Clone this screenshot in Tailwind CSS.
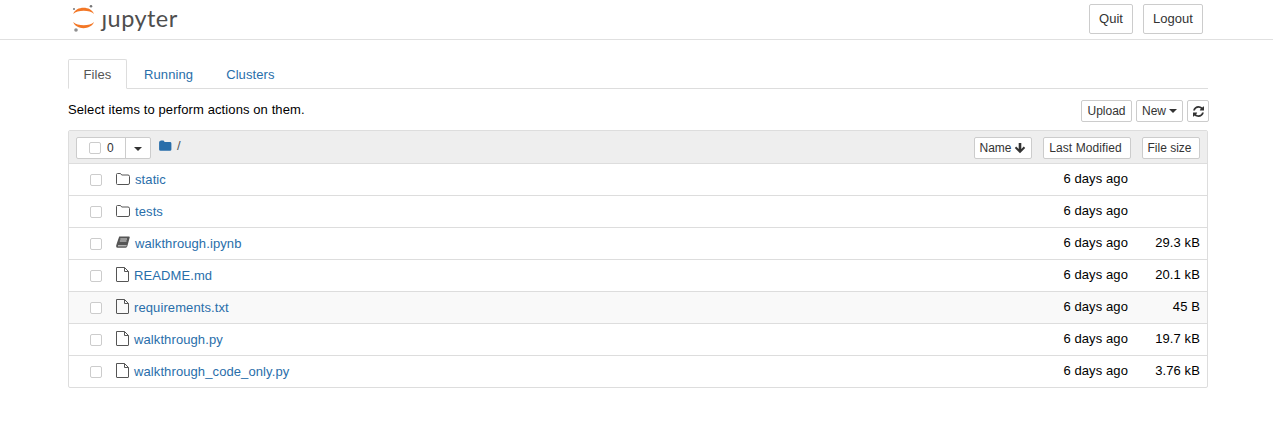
<!DOCTYPE html>
<html lang="en">
<head>
<meta charset="utf-8">
<title>Home</title>
<script src="https://cdn.jsdelivr.net/npm/@tailwindcss/browser@4"></script>
</head>
<body class="bg-white font-['Liberation_Sans',Arial,sans-serif] text-[13px] text-black leading-[18px] tracking-[0.1px] h-[448px] overflow-hidden">
<header class="h-10 border-b border-[#e0e0e0] flex items-start pl-[72px] pr-[70px]">
  <div class="flex items-start pt-[3px]">
    <svg width="30" height="31" viewBox="0 0 30 31">
      <path d="M1.200 11 C4 2.800 19 2.800 22 11 C18 6.600 5.500 6.600 1.200 11 Z" fill="#f37726"/>
      <path d="M1.200 19 C4 27.200 19 27.200 22 19 C18 23.400 5.500 23.400 1.200 19 Z" fill="#f37726"/>
      <circle cx="19" cy="3.200" r="1.300" fill="#767677"/>
      <circle cx="2" cy="6" r="1" fill="#767677"/>
      <circle cx="4" cy="27" r="1.800" fill="#8f8f90"/>
    </svg>
    <span class="ml-[-0.5px] font-['Lato',sans-serif] text-[23.5px] leading-[30px] tracking-[0.45px] text-[#4e4e4e]">ȷupyter</span>
  </div>
  <div class="ml-auto flex gap-[10px] pt-1">
    <button class="h-[30px] w-[44px] border border-[#ccc] rounded-[2px] bg-white text-[#333] text-[13px] tracking-normal">Quit</button>
    <button class="h-[30px] w-[60px] border border-[#ccc] rounded-[2px] bg-white text-[#333] text-[13px] tracking-normal">Logout</button>
  </div>
</header>

<main class="ml-[68px] w-[1140px] pt-[19px]">
  <nav class="flex h-[30px] border-b border-[#ddd] text-[13px]">
    <a class="h-[30px] w-[59px] flex items-center justify-center pt-[2px] border border-[#ddd] border-b-white rounded-t-[2px] text-[#555] bg-white">Files</a>
    <a class="h-[29px] ml-[17px] pt-[2px] flex items-center text-[#296eaa]">Running</a>
    <a class="h-[29px] ml-[33px] pt-[2px] flex items-center text-[#296eaa]">Clusters</a>
  </nav>

  <div class="flex items-start h-[41px] pt-[11px] relative">
    <span class="mt-[1px]">Select items to perform actions on them.</span>
    <div class="ml-auto mr-[-1px] flex gap-1 text-[12px] text-[#333] tracking-normal">
      <button class="h-[22px] w-[51px] border border-[#ccc] rounded-[2px] bg-white">Upload</button>
      <button class="h-[22px] w-[47px] border border-[#ccc] rounded-[2px] bg-white flex items-center justify-center gap-[3px]">New <span class="w-0 h-0 border-x-[4px] border-x-transparent border-t-[4px] border-t-[#333]"></span></button>
      <button class="h-[22px] w-[22px] border border-[#ccc] rounded-[2px] bg-white flex items-center justify-center">
        <svg width="11" height="11" viewBox="0 0 1536 1536" fill="#333"><path d="M1511 928q0 5-1 7-64 268-268 434.500t-478 166.500q-146 0-282.500-55t-243.500-157l-129 129q-19 19-45 19t-45-19-19-45v-448q0-26 19-45t45-19h448q26 0 45 19t19 45-19 45l-137 137q71 66 161 102t187 36q134 0 250-65t186-179q11-17 53-117 8-23 30-23h192q13 0 22.500 9.500t9.500 22.500zM1536 128v448q0 26-19 45t-45 19h-448q-26 0-45-19t-19-45 19-45l138-138q-148-137-349-137-134 0-250 65t-186 179q-11 17-53 117-8 23-30 23h-199q-13 0-22.500-9.500t-9.500-22.500v-7q65-268 270-434.500t480-166.500q146 0 284 55.500t245 156.500l130-129q19-19 45-19t45 19 19 45z"/></svg>
      </button>
    </div>
  </div>

  <section class="border border-[#ddd] rounded-[2px]">
    <div class="h-[33px] bg-[#eeeeee] border-b border-[#ddd] flex items-start pl-[7px] pr-[7px] pt-[6px]">
      <div class="flex h-[22px] border border-[#ccc] rounded-[2px] bg-white w-[75px] text-[12px]">
        <span class="w-[49px] flex items-center border-r border-[#ccc] pl-[12px] gap-[6px]">
          <span class="w-[12px] h-[12px] border border-[#ccc] rounded-[2px]"></span><span class="text-[#333]">0</span>
        </span>
        <span class="flex-1 flex items-center justify-center"><span class="w-0 h-0 border-x-[4px] border-x-transparent border-t-[4px] border-t-[#333] mt-[1px]"></span></span>
      </div>
      <svg class="ml-[8px] mt-[3px]" width="13" height="11" viewBox="0 0 13 11"><path d="M1.500 0.500h3l1.200 1.500h5.300a1.400 1.400 0 0 1 1.400 1.400v6a1.400 1.400 0 0 1-1.400 1.400h-9.500a1.400 1.400 0 0 1-1.400-1.400v-7a1.400 1.400 0 0 1 1.400-1.400z" fill="#296eaa"/></svg>
      <span class="ml-[5px] text-[#555]">/</span>
      <div class="ml-auto flex text-[12px] text-[#333] tracking-normal">
        <button class="h-[22px] w-[58px] border border-[#ccc] rounded-[2px] bg-white flex items-center justify-center gap-[2px] pr-[1px]">Name
          <svg width="12" height="12" viewBox="0 0 12 12" fill="#333"><path d="M6 11.200 L0.800 6 L2.200 4.600 L4.700 7.100 V1 H7.300 V7.100 L9.800 4.600 L11.200 6 Z"/></svg>
        </button>
        <button class="ml-[11px] h-[22px] w-[88px] border border-[#ccc] rounded-[2px] bg-white pr-[3px] tracking-[0.1px]">Last Modified</button>
        <button class="ml-[11px] h-[22px] w-[58px] border border-[#ccc] rounded-[2px] bg-white pr-[3px]">File size</button>
      </div>
    </div>

    <div class="h-[32px] flex items-center border-b border-[#ddd] pl-[21px] pr-[7px]">
      <span class="w-[12px] h-[12px] border border-[#ccc] rounded-[2px]"></span>
      <svg class="ml-[14px] mb-[2px]" width="14" height="12" viewBox="0 0 14 12" fill="none" stroke="#555"><path d="M1.500 0.500h3l1.200 1.500h6.300a1.500 1.500 0 0 1 1.500 1.500v6.500a1.500 1.500 0 0 1-1.500 1.500h-10.500a1 1 0 0 1-1-1v-9a1 1 0 0 1 1-1z"/></svg>
      <a class="ml-[5px] text-[#296eaa]">static</a>
      <span class="ml-auto text-right mr-[72px] mb-[1px]">6 days ago</span>
    </div>
    <div class="h-[32px] flex items-center border-b border-[#ddd] pl-[21px] pr-[7px]">
      <span class="w-[12px] h-[12px] border border-[#ccc] rounded-[2px]"></span>
      <svg class="ml-[14px] mb-[2px]" width="14" height="12" viewBox="0 0 14 12" fill="none" stroke="#555"><path d="M1.500 0.500h3l1.200 1.500h6.300a1.500 1.500 0 0 1 1.500 1.500v6.500a1.500 1.500 0 0 1-1.500 1.500h-10.500a1 1 0 0 1-1-1v-9a1 1 0 0 1 1-1z"/></svg>
      <a class="ml-[5px] text-[#296eaa]">tests</a>
      <span class="ml-auto text-right mr-[72px] mb-[1px]">6 days ago</span>
    </div>
    <div class="h-[32px] flex items-center border-b border-[#ddd] pl-[21px] pr-[7px]">
      <span class="w-[12px] h-[12px] border border-[#ccc] rounded-[2px]"></span>
      <svg class="ml-[14px] mb-[3px]" width="14" height="13" viewBox="0 0 14 13"><path d="M3.200 0.500h9.800q1 0 0.700 1l-2.300 8.500q-0.400 1.800-1.800 1.800h-7.800q-2 0-1.600-2.300l0.500-1.800z" fill="#555"/><path d="M2 9.800h8.600M4.300 3h6.700M3.800 5h6.700" stroke="#fff" stroke-width="0.800"/></svg>
      <a class="ml-[5px] text-[#296eaa]">walkthrough.ipynb</a>
      <span class="ml-auto text-right mb-[1px]">6 days ago</span>
      <span class="w-[72px] text-right mb-[1px]">29.3 kB</span>
    </div>
    <div class="h-[32px] flex items-center border-b border-[#ddd] pl-[21px] pr-[7px]">
      <span class="w-[12px] h-[12px] border border-[#ccc] rounded-[2px]"></span>
      <svg class="ml-[14px] mb-[3px]" width="13" height="15" viewBox="0 0 13 15" fill="none" stroke="#555"><path d="M0.500 0.500h8l4 4v9.500a0.500 0.500 0 0 1-0.500 0.500h-11a0.500 0.500 0 0 1-0.500-0.500zM8.500 0.500v4h4"/></svg>
      <a class="ml-[5px] text-[#296eaa]">README.md</a>
      <span class="ml-auto text-right mb-[1px]">6 days ago</span>
      <span class="w-[72px] text-right mb-[1px]">20.1 kB</span>
    </div>
    <div class="h-[32px] flex items-center border-b border-[#ddd] pl-[21px] pr-[7px] bg-[#f9f9f9]">
      <span class="w-[12px] h-[12px] border border-[#ccc] rounded-[2px] bg-white"></span>
      <svg class="ml-[14px] mb-[3px]" width="13" height="15" viewBox="0 0 13 15" fill="none" stroke="#555"><path d="M0.500 0.500h8l4 4v9.500a0.500 0.500 0 0 1-0.500 0.500h-11a0.500 0.500 0 0 1-0.500-0.500zM8.500 0.500v4h4"/></svg>
      <a class="ml-[5px] text-[#296eaa]">requirements.txt</a>
      <span class="ml-auto text-right mb-[1px]">6 days ago</span>
      <span class="w-[72px] text-right mb-[1px]">45 B</span>
    </div>
    <div class="h-[32px] flex items-center border-b border-[#ddd] pl-[21px] pr-[7px]">
      <span class="w-[12px] h-[12px] border border-[#ccc] rounded-[2px]"></span>
      <svg class="ml-[14px] mb-[3px]" width="13" height="15" viewBox="0 0 13 15" fill="none" stroke="#555"><path d="M0.500 0.500h8l4 4v9.500a0.500 0.500 0 0 1-0.500 0.500h-11a0.500 0.500 0 0 1-0.500-0.500zM8.500 0.500v4h4"/></svg>
      <a class="ml-[5px] text-[#296eaa]">walkthrough.py</a>
      <span class="ml-auto text-right mb-[1px]">6 days ago</span>
      <span class="w-[72px] text-right mb-[1px]">19.7 kB</span>
    </div>
    <div class="h-[31px] flex items-center pl-[21px] pr-[7px]">
      <span class="w-[12px] h-[12px] border border-[#ccc] rounded-[2px]"></span>
      <svg class="ml-[14px] mb-[3px]" width="13" height="15" viewBox="0 0 13 15" fill="none" stroke="#555"><path d="M0.500 0.500h8l4 4v9.500a0.500 0.500 0 0 1-0.500 0.500h-11a0.500 0.500 0 0 1-0.500-0.500zM8.500 0.500v4h4"/></svg>
      <a class="ml-[5px] text-[#296eaa]">walkthrough_code_only.py</a>
      <span class="ml-auto text-right mb-[1px]">6 days ago</span>
      <span class="w-[72px] text-right mb-[1px]">3.76 kB</span>
    </div>
  </section>
</main>
</body>
</html>
